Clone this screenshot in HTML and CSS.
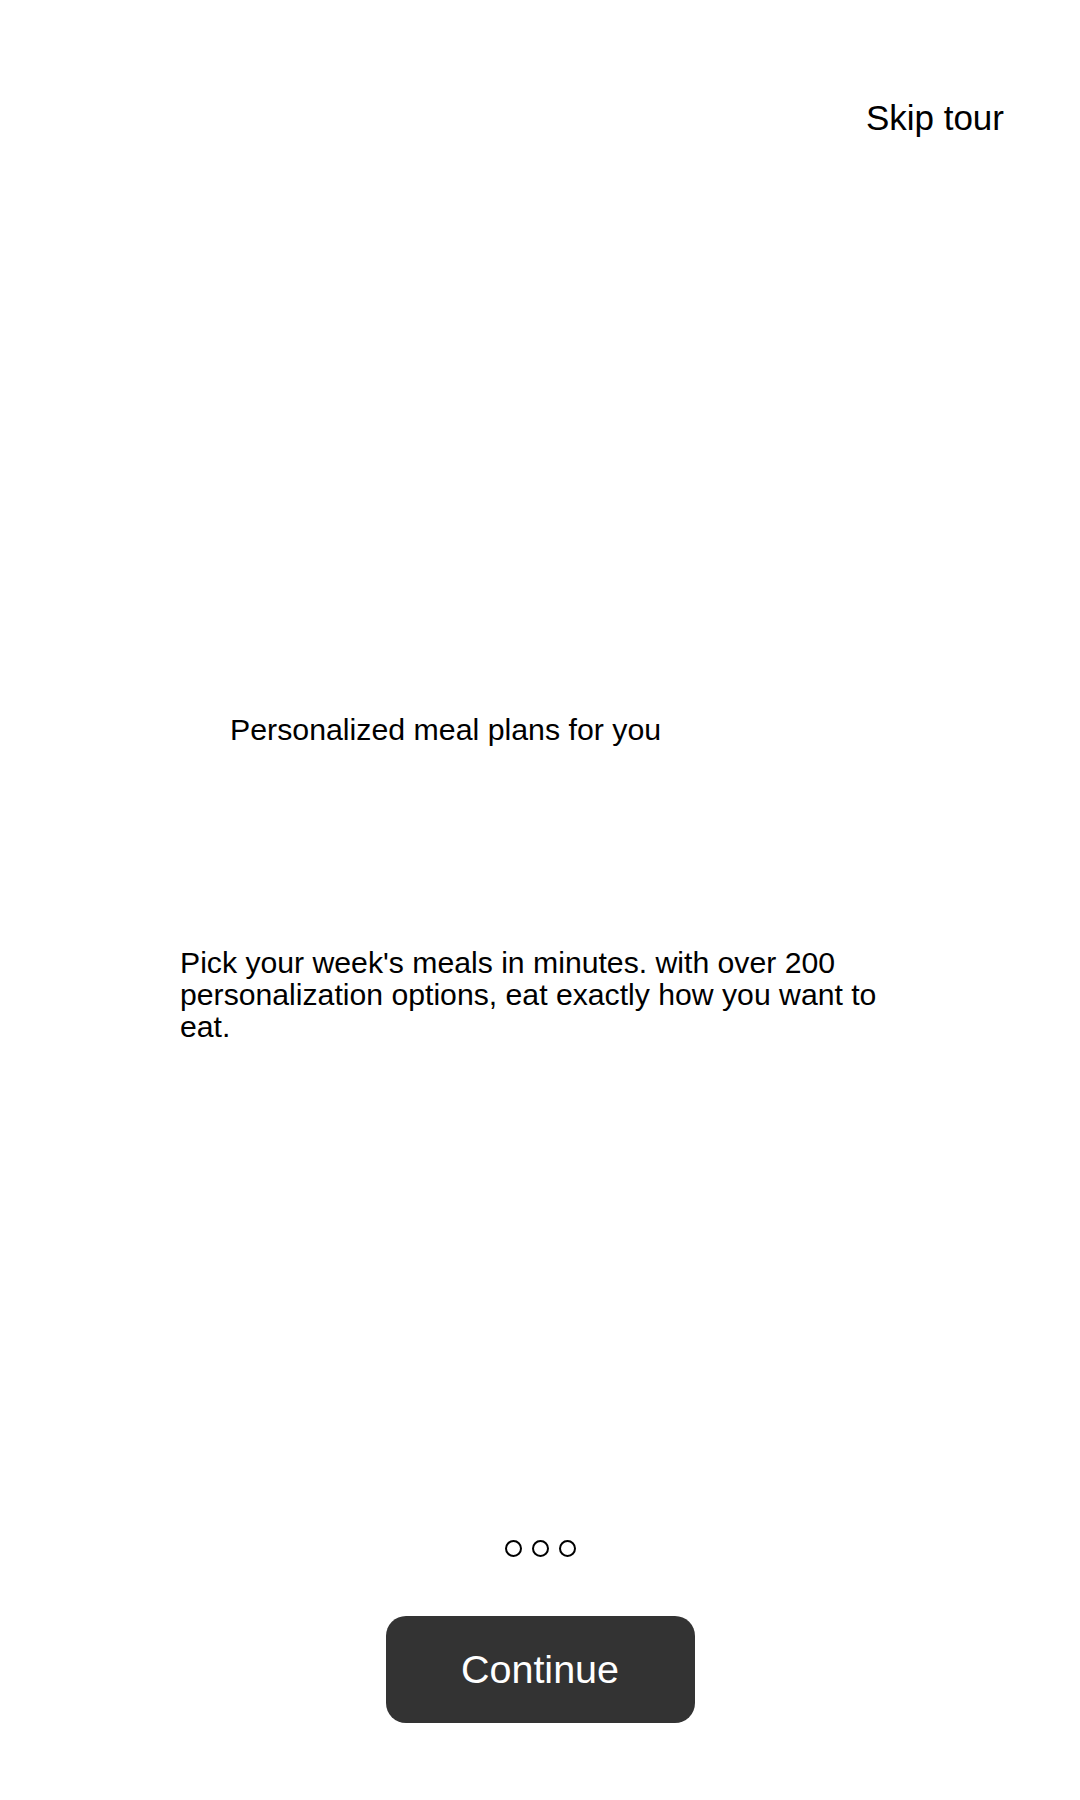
FILE: index.html
```html
<!DOCTYPE html>
<html lang="en">
<head>
    <meta charset="UTF-8">
    <meta name="viewport" content="width=device-width, initial-scale=1.0">
    <title>Tour - Personalized meal plans</title>
    <link rel="stylesheet" href="styles.css">
</head>
<body>
    <div class="screen">
        <header class="top-bar">
            <a class="skip" href="#">Skip tour</a>
        </header>

        <main class="slide">
            <h2 class="slide-title">Personalized meal plans for you</h2>
            <p class="slide-text">Pick your week's meals in minutes. with over 200 personalization options, eat exactly how you want to eat.</p>
        </main>

        <footer class="bottom">
            <div class="dots">
                <span class="dot"></span>
                <span class="dot"></span>
                <span class="dot"></span>
            </div>
            <button class="continue">Continue</button>
        </footer>
    </div>
</body>
</html>
```

FILE: styles.css
```css
body {
    margin: 0;
    font-family: "Liberation Sans", Arial, sans-serif;
    background-color: #fff;
    color: #000;
}
.screen {
    display: flex;
    flex-direction: column;
    min-height: 1800px;
}
.top-bar {
    display: flex;
    justify-content: flex-end;
    padding: 98px 76px 0 0;
}
.skip {
    font-size: 35px;
    line-height: 40px;
    color: #000;
    text-decoration: none;
}
.slide {
    display: flex;
    flex-direction: column;
}
.slide-title {
    margin: 575px 0 0 230px;
    font-size: 30.3px;
    line-height: 34px;
    font-weight: normal;
}
.slide-text {
    width: 720px;
    margin: 200px 0 0 180px;
    font-size: 30.2px;
    line-height: 32px;
}
.bottom {
    display: flex;
    flex-direction: column;
    align-items: center;
    margin-top: 497px;
}
.dots {
    display: flex;
    gap: 10px;
}
.dot {
    width: 17px;
    height: 17px;
    border: 2.5px solid #000;
    border-radius: 50%;
    box-sizing: border-box;
}
.continue {
    margin-top: 59px;
    width: 309px;
    height: 107px;
    border: none;
    border-radius: 20px;
    background-color: #333;
    color: #fff;
    font-family: "Liberation Sans", Arial, sans-serif;
    font-size: 39.5px;
}
```
